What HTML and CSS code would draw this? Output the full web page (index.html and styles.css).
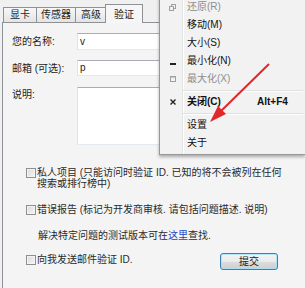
FILE: index.html
```html
<!DOCTYPE html>
<html lang="zh-CN">
<head>
    <meta charset="UTF-8">
    <meta name="viewport" content="width=device-width, initial-scale=1.0">
    <title>验证</title>
    <link rel="stylesheet" href="styles.css">
</head>
<body>
    <div class="dialog">
        <div class="tabs">
            <div class="tab t1">显卡</div>
            <div class="tab t2">传感器</div>
            <div class="tab t3">高级</div>
            <div class="tab active">验证</div>
        </div>
        <div class="panel">
            <div class="form">
                <div class="lbl">您的名称:</div>
                <div class="field f1">v</div>
                <div class="lbl">邮箱 (可选):</div>
                <div class="field f2">p</div>
                <div class="lbl top">说明:</div>
                <div class="field area"></div>
            </div>

            <div class="check c1">
                <span class="box"></span>
                <span class="ctext">私人项目 (只能访问时验证 ID. 已知的将不会被列在任何<br>搜索或排行榜中)</span>
            </div>
            <div class="check c2">
                <span class="box"></span>
                <span class="ctext">错误报告 (标记为开发商审核. 请包括问题描述. 说明)</span>
            </div>
            <div class="note">解决特定问题的测试版本可在<a class="link">这里</a>查找.</div>
            <div class="last-row">
                <div class="check c3">
                    <span class="box"></span>
                    <span class="ctext">向我发送邮件验证 ID.</span>
                </div>
                <button class="submit">提交</button>
            </div>
        </div>
    </div>

    <!-- system menu popup -->
    <div class="menu">
        <div class="item disabled">
            <span class="ico">
                <svg width="7" height="7" viewBox="0 0 7 7"><rect x="2.5" y="0.5" width="4" height="4" fill="none" stroke="#a0a0a0"/><rect x="0.5" y="2.5" width="4" height="4" fill="#f0f0f0" stroke="#a0a0a0"/></svg>
            </span>
            <span class="txt">还原(R)</span>
        </div>
        <div class="item"><span class="ico"></span><span class="txt">移动(M)</span></div>
        <div class="item"><span class="ico"></span><span class="txt">大小(S)</span></div>
        <div class="item">
            <span class="ico">
                <svg width="6" height="7" viewBox="0 0 6 7"><rect x="0" y="5" width="6" height="2" fill="#222"/></svg>
            </span>
            <span class="txt">最小化(N)</span>
        </div>
        <div class="item disabled">
            <span class="ico">
                <svg width="6" height="6" viewBox="0 0 6 6"><rect x="0.5" y="0.5" width="5" height="5" fill="none" stroke="#a0a0a0"/><rect x="0" y="0" width="6" height="1.5" fill="#a0a0a0"/></svg>
            </span>
            <span class="txt">最大化(X)</span>
        </div>
        <div class="sep"></div>
        <div class="item bold">
            <span class="ico">
                <svg width="6" height="6" viewBox="0 0 6 6"><path d="M0.5 0.5 L5.5 5.5 M5.5 0.5 L0.5 5.5" stroke="#222" stroke-width="1.4"/></svg>
            </span>
            <span class="txt">关闭(C)</span>
            <span class="key">Alt+F4</span>
        </div>
        <div class="sep"></div>
        <div class="item"><span class="ico"></span><span class="txt">设置</span></div>
        <div class="item"><span class="ico"></span><span class="txt">关于</span></div>
    </div>

    <svg class="arrow" width="305" height="288" viewBox="0 0 305 288">
        <line x1="269" y1="64" x2="219" y2="113" stroke="#e3262a" stroke-width="2"/>
        <polygon points="210,122 226,114 218,106" fill="#e3262a"/>
    </svg>
</body>
</html>
```

FILE: styles.css
```css
body {
    margin: 0;
    width: 305px;
    height: 288px;
    overflow: hidden;
    position: relative;
    background-color: #f0f0f0;
    color: #1e1e1e;
    font-family: "Liberation Sans", "Noto Sans CJK SC", sans-serif;
    font-size: 10px;
}
.dialog {
    margin-left: 2px;
    padding-top: 4px;
}
.tabs {
    display: flex;
    align-items: flex-end;
    height: 18px;
    padding-left: 1px;
}
.tab {
    box-sizing: border-box;
    height: 15px;
    border: 1px solid #8e9297;
    border-bottom: none;
    background: linear-gradient(#f7f7f7, #e4e4e4);
    margin-right: -1px;
    text-align: center;
    line-height: 14px;
}
.t1 { width: 34px; }
.t2 { width: 40px; }
.t3 { width: 32px; }
.tab.active {
    width: 38px;
    height: 19px;
    margin-left: -1px;
    margin-bottom: -1px;
    background: #f6f6f6;
    line-height: 19px;
    position: relative;
    z-index: 1;
}
.panel {
    box-sizing: border-box;
    height: 266px;
    border-top: 1px solid #8e9297;
    border-left: 1px solid #8e9297;
    background-color: #f4f4f4;
    display: flex;
    flex-direction: column;
}
.form {
    display: grid;
    grid-template-columns: 65px 1fr;
    row-gap: 10px;
    padding: 10px 18px 0 9px;
}
.lbl {
    align-self: center;
    line-height: 11px;
}
.lbl.top {
    align-self: start;
    padding-top: 3px;
}
.field {
    box-sizing: border-box;
    background: #fff;
    border: 1px solid;
    border-color: #abadb3 #dbdfe6 #e3e9ef #e2e3ea;
    padding-left: 2px;
    color: #222;
}
.f1 { height: 17px; line-height: 15px; }
.f2 { height: 16px; line-height: 14px; }
.area { height: 58px; margin-top: 1px; }

.check {
    display: flex;
    align-items: flex-start;
    gap: 1px;
    line-height: 11px;
    color: #2a2a2a;
}
.box {
    flex: none;
    box-sizing: border-box;
    width: 10px;
    height: 10px;
    margin-top: 1px;
    border: 1px solid #8e8f8f;
    background: linear-gradient(135deg, #dadada, #f6f6f6);
    box-shadow: inset 0 0 0 1px #f4f4f4;
}
.c1 { margin: 22px 0 0 23px; }
.c2 { margin: 15px 0 0 23px; }
.note {
    margin: 15px 0 0 35px;
    line-height: 11px;
    color: #2a2a2a;
}
.link { color: #1a44c8; }
.last-row {
    display: flex;
    justify-content: space-between;
    align-items: flex-start;
    margin-top: 12px;
    padding: 0 27px 0 23px;
}
.c3 { margin-top: 1px; }
.submit {
    box-sizing: border-box;
    width: 58px;
    height: 17px;
    padding: 0;
    border: 1px solid #3c7fb1;
    border-radius: 3px;
    background: linear-gradient(#f3f3f3, #ebebeb 50%, #dddddd 50%, #cfcfcf);
    box-shadow: inset 0 0 0 1px rgba(160, 225, 255, 0.7);
    font-family: "Liberation Sans", "Noto Sans CJK SC", sans-serif;
    font-size: 10px;
    line-height: 15px;
    color: #1e1e1e;
}

.menu {
    position: absolute;
    left: 159px;
    top: -5px;
    width: 141px;
    padding: 2px;
    border: 1px solid #979797;
    border-right: none;
    background:
        linear-gradient(to right, transparent 22px, #e2e3e3 22px, #e2e3e3 23px, #fff 23px, #fff 24px, transparent 24px),
        #f2f2f2;
    box-shadow: 0 2px 3px rgba(0, 0, 0, 0.3);
    color: #111;
}
.item {
    display: grid;
    grid-template-columns: 21px 74px auto;
    height: 18px;
    line-height: 18px;
}
.ico {
    display: flex;
    justify-content: center;
    align-items: center;
}
.txt { padding-left: 4px; }
.item.disabled { color: #8d8d8d; }
.item.bold { font-weight: bold; }
.key { font-weight: bold; }
.sep {
    height: 5px;
    margin-left: 21px;
    background: linear-gradient(transparent 2px, #e0e0e0 2px, #e0e0e0 3px, #fff 3px, #fff 4px, transparent 4px);
}
.arrow {
    position: absolute;
    left: 0;
    top: 0;
    pointer-events: none;
}
```
